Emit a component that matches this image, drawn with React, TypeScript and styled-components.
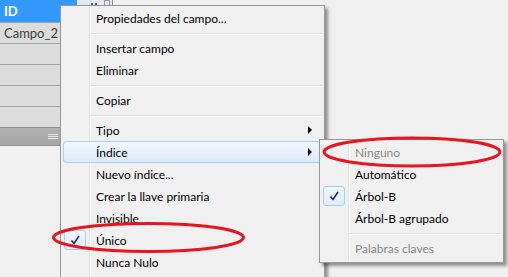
import React from "react";
import styled, { createGlobalStyle } from "styled-components";

const Global = createGlobalStyle`
  html, body { margin: 0; padding: 0; background: #f0f0f0; }
  * { box-sizing: border-box; }
`;

const Screen = styled.div`
  position: relative;
  width: 508px;
  height: 277px;
  overflow: hidden;
  background: #f0f0f0;
  font-family: Lato, "Noto Sans", sans-serif;
  font-size: 12px;
  color: #000;
`;

const Table = styled.div`
  width: 113px;
  display: flex;
  flex-direction: column;
`;

const HeaderRow = styled.div`
  display: flex;
  height: 22px;
`;

const HeaderCell = styled.div`
  width: 77px;
  background: #3399ff;
  color: #fff;
  font-weight: bold;
  font-size: 13px;
  padding-left: 4px;
  display: flex;
  align-items: center;
`;

const HeaderTools = styled.div`
  flex: 1;
  background: #e4e7ec;
  border-right: 1px solid #8a8a8a;
  display: flex;
  align-items: flex-start;
  padding: 2px 0 0 14px;
  gap: 7px;
`;

const Dots = styled.div`
  display: flex;
  gap: 2px;
  margin-top: 1px;
  & > span {
    width: 2px;
    height: 2px;
    background: #4a5a88;
  }
`;

const TinyBox = styled.div`
  width: 6px;
  height: 6px;
  border: 1px solid #9a9a9a;
  margin-top: -2px;
`;

const Row = styled.div`
  height: 21px;
  border-top: 1px solid #a3a3a3;
  background: #dcdcdc;
  border-right: 1px solid #8a8a8a;
  color: #3c3c3c;
  font-size: 13px;
  padding-left: 4px;
  display: flex;
  align-items: center;
`;

const FooterBar = styled.div`
  height: 19px;
  border-top: 1px solid #8e8e8e;
  border-bottom: 1px solid #8e8e8e;
  border-right: 1px solid #8a8a8a;
  background: linear-gradient(#b1b1b1, #a6a6a6);
  display: flex;
  align-items: center;
  padding-left: 48px;
`;

const Grip = styled.div`
  width: 10px;
  display: flex;
  flex-direction: column;
  gap: 1px;
  & > span {
    height: 1px;
    background: #e6e6e6;
  }
`;

const Menu = styled.div<{ $left: number; $top: number; $width: number; $height?: number }>`
  position: absolute;
  left: ${(p) => p.$left}px;
  top: ${(p) => p.$top}px;
  width: ${(p) => p.$width}px;
  ${(p) => (p.$height ? `height: ${p.$height}px;` : "")}
  border: 1px solid #979797;
  padding: 1px 2px;
  background: linear-gradient(
    to right,
    #f1f1f1 0 28px,
    #e2e3e3 28px 29px,
    #ffffff 29px 30px,
    #f0f0f0 30px
  );
  box-shadow: 3px 3px 3px rgba(0, 0, 0, 0.4);
  display: flex;
  flex-direction: column;
`;

const Item = styled.div<{ $active?: boolean; $disabled?: boolean }>`
  height: 22px;
  display: flex;
  align-items: center;
  border: 1px solid ${(p) => (p.$active ? "#a9cff3" : "transparent")};
  border-radius: 3px;
  background: ${(p) =>
    p.$active ? "linear-gradient(#f2f8fe, #dde9f9)" : "transparent"};
  color: ${(p) => (p.$disabled ? "#878787" : "#000")};
  white-space: nowrap;
`;

const Gutter = styled.div`
  width: 22px;
  height: 20px;
  flex: none;
  display: flex;
  align-items: center;
  justify-content: center;
`;

const CheckBox = styled.div`
  width: 22px;
  height: 20px;
  border: 1px solid #a8cdf2;
  border-radius: 3px;
  background: linear-gradient(#eef5fd, #e1ecfa);
  display: flex;
  align-items: center;
  justify-content: center;
`;

const Label = styled.span`
  flex: 1;
  margin-left: 10px;
`;

const Arrow = styled.span`
  width: 0;
  height: 0;
  border-left: 4px solid #000;
  border-top: 4px solid transparent;
  border-bottom: 4px solid transparent;
  margin-right: 9px;
`;

const Separator = styled.div`
  height: 8px;
  margin-left: 27px;
  display: flex;
  flex-direction: column;
  padding-top: 4px;
  & > span:first-child {
    height: 1px;
    background: #e0e0e0;
  }
  & > span:last-child {
    height: 1px;
    background: #ffffff;
  }
`;

const Overlay = styled.svg`
  position: absolute;
  left: 0;
  top: 0;
  pointer-events: none;
`;

const Check = () => (
  <CheckBox>
    <svg width="12" height="12" viewBox="0 0 12 12">
      <path d="M2.5 6.5 L5 9.5 L10 2" fill="none" stroke="#1a2a80" strokeWidth="1.6" />
    </svg>
  </CheckBox>
);

type Entry =
  | { sep: true }
  | { label: string; sub?: boolean; checked?: boolean; active?: boolean; disabled?: boolean };

const MenuList = ({ items }: { items: Entry[] }) => (
  <>
    {items.map((it, i) =>
      "sep" in it ? (
        <Separator key={i}>
          <span />
          <span />
        </Separator>
      ) : (
        <Item key={i} $active={it.active} $disabled={it.disabled}>
          <Gutter>{it.checked ? <Check /> : null}</Gutter>
          <Label>{it.label}</Label>
          {it.sub ? <Arrow /> : null}
        </Item>
      )
    )}
  </>
);

const mainItems: Entry[] = [
  { label: "Propiedades del campo..." },
  { sep: true },
  { label: "Insertar campo" },
  { label: "Eliminar" },
  { sep: true },
  { label: "Copiar" },
  { sep: true },
  { label: "Tipo", sub: true },
  { label: "Índice", sub: true, active: true },
  { label: "Nuevo índice..." },
  { label: "Crear la llave primaria" },
  { label: "Invisible" },
  { label: "Único", checked: true },
  { label: "Nunca Nulo" },
];

const subItems: Entry[] = [
  { label: "Ninguno", disabled: true },
  { label: "Automático" },
  { label: "Árbol-B", checked: true },
  { label: "Árbol-B agrupado" },
  { sep: true },
  { label: "Palabras claves", disabled: true },
];

export default function App() {
  return (
    <Screen>
      <Global />
      <Table>
        <HeaderRow>
          <HeaderCell>ID</HeaderCell>
          <HeaderTools>
            <Dots>
              <span />
              <span />
            </Dots>
            <TinyBox />
          </HeaderTools>
        </HeaderRow>
        <Row>Campo_2</Row>
        <Row />
        <Row />
        <Row />
        <Row />
        <FooterBar>
          <Grip>
            <span />
            <span />
            <span />
          </Grip>
        </FooterBar>
      </Table>

      <Menu $left={60} $top={5} $width={265} $height={290}>
        <MenuList items={mainItems} />
      </Menu>

      <Menu $left={319} $top={139} $width={185} $height={124}>
        <MenuList items={subItems} />
      </Menu>

      <Overlay width="508" height="277" viewBox="0 0 508 277">
        <ellipse cx="148.5" cy="237.5" rx="95" ry="14" fill="none" stroke="#e8141e" strokeWidth="3" />
        <ellipse cx="412" cy="152" rx="88" ry="14" fill="none" stroke="#e8141e" strokeWidth="3" />
      </Overlay>
    </Screen>
  );
}
